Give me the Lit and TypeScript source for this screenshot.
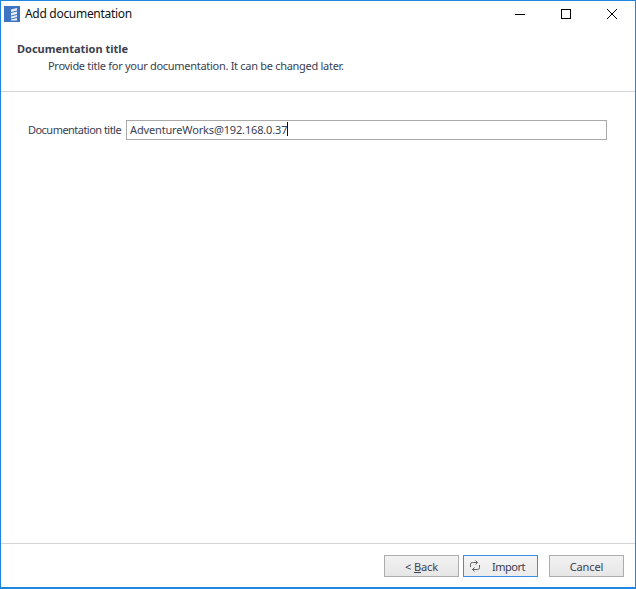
import { LitElement, css, html } from 'lit';
import { customElement } from 'lit/decorators.js';

@customElement('app-root')
export class AppRoot extends LitElement {
  static override styles = css`
    :host {
      display: block;
      width: 636px;
      height: 589px;
      font-family: 'Noto Sans', sans-serif;
      font-size: 11px;
      color: #3a4152;
    }
    .window {
      box-sizing: border-box;
      width: 636px;
      height: 589px;
      display: flex;
      flex-direction: column;
      background: #fff;
      border: 1px solid #1f86e0;
      border-bottom-width: 2px;
    }
    .titlebar {
      display: flex;
      align-items: center;
      height: 26px;
      padding-left: 3px;
      flex: none;
    }
    .logo {
      width: 16px;
      height: 16px;
      flex: none;
    }
    .title {
      margin-left: 5px;
      padding-bottom: 2px;
      font-size: 12px;
      letter-spacing: -0.3px;
      color: #111;
      flex: 1;
    }
    .ctl {
      width: 46px;
      height: 26px;
      display: flex;
      align-items: center;
      justify-content: center;
    }
    .header {
      height: 65px;
      flex: none;
      box-sizing: border-box;
      padding: 14px 0 0 16px;
      border-bottom: 1px solid #d4d4d4;
    }
    .heading {
      font-weight: 700;
      line-height: 15px;
    }
    .sub {
      margin: 2px 0 0 31px;
      line-height: 15px;
      letter-spacing: -0.29px;
    }
    .body {
      flex: 1;
      padding: 28px 28px 0 27px;
    }
    .row {
      display: flex;
      align-items: center;
      gap: 5px;
    }
    .label {
      width: 93px;
      flex: none;
      padding-bottom: 2px;
      white-space: nowrap;
      letter-spacing: -0.53px;
    }
    .field {
      flex: 1;
      box-sizing: border-box;
      height: 20px;
      display: flex;
      align-items: center;
      padding: 0 0 2px 3px;
      border: 1px solid #a9a9a9;
      letter-spacing: -0.15px;
    }
    .caret {
      width: 1px;
      height: 14px;
      background: #111;
    }
    .footer {
      height: 44px;
      flex: none;
      box-sizing: border-box;
      display: flex;
      padding: 11px 11px 0 383px;
      border-top: 1px solid #d4d4d4;
    }
    .btn {
      box-sizing: border-box;
      width: 75px;
      height: 22px;
      display: flex;
      align-items: center;
      justify-content: center;
      border: 1px solid #adadad;
      background: linear-gradient(#f2f2f2, #e6e6e6);
      letter-spacing: -0.1px;
    }
    .btn u {
      text-underline-offset: 1px;
    }
    .import {
      position: relative;
      margin-left: 4px;
      padding-left: 16px;
      border-color: #3b8ee8;
      background: linear-gradient(#f4f4f4, #ececec);
      letter-spacing: -0.5px;
    }
    .import svg {
      position: absolute;
      left: 4px;
      top: 3px;
    }
    .cancel {
      margin-left: 11px;
    }
  `;

  override render() {
    return html`
      <div class="window">
        <div class="titlebar">
          <svg class="logo" viewBox="0 0 16 16">
            <rect width="16" height="16" fill="#3f74c4" />
            <path
              d="M7 3.500l6-1.500v2.500L7 6zM7 7l6-1.500V8L7 9.500zM7 10.500L13 9v2l-6 1.500zM7 13.500l6-1.500v2.500H7z"
              fill="#e8eef8"
            />
          </svg>
          <span class="title">Add documentation</span>
          <div class="ctl">
            <svg width="10" height="10"><path d="M0 5.500h10" stroke="#000" /></svg>
          </div>
          <div class="ctl">
            <svg width="10" height="10">
              <rect x=".5" y=".5" width="9" height="9" fill="none" stroke="#000" />
            </svg>
          </div>
          <div class="ctl">
            <svg width="10" height="10"><path d="M0 0l10 10M10 0L0 10" stroke="#000" /></svg>
          </div>
        </div>
        <div class="header">
          <div class="heading">Documentation title</div>
          <div class="sub">Provide title for your documentation. It can be changed later.</div>
        </div>
        <div class="body">
          <div class="row">
            <span class="label">Documentation title</span>
            <div class="field">AdventureWorks@192.168.0.37<span class="caret"></span></div>
          </div>
        </div>
        <div class="footer">
          <div class="btn">&lt;&nbsp;<u>B</u>ack</div>
          <div class="btn import">
            <svg width="14" height="14" viewBox="0 0 14 14" fill="none" stroke="#5f5f5f">
              <path
                d="M2.500 8V5.500a2 2 0 0 1 2-2h5M7.500 1.500l2 2-2 2M11.500 6v2.500a2 2 0 0 1-2 2h-5M6.500 8.500l-2 2 2 2"
              />
            </svg>
            Import
          </div>
          <div class="btn cancel">Cancel</div>
        </div>
      </div>
    `;
  }
}

declare global {
  interface HTMLElementTagNameMap {
    'app-root': AppRoot;
  }
}
